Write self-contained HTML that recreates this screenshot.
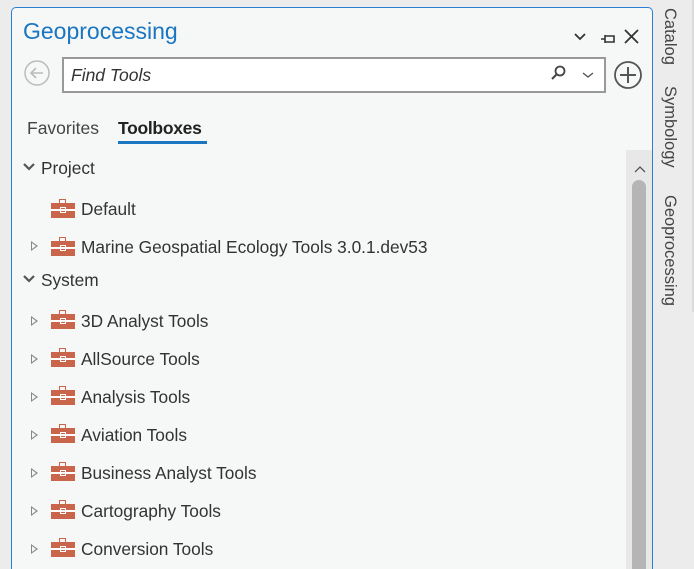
<!DOCTYPE html>
<html style="overflow:hidden;height:569px"><head><style>
body{margin:0;width:694px;height:569px;background:#ececec;font-family:"Liberation Sans",sans-serif;position:relative;overflow:hidden}
.panel{position:absolute;left:11px;top:7px;width:640px;height:562px;border:1px solid #2a7fd4;border-bottom:none;border-radius:5px 5px 0 0;background:#f6f7f7;overflow:hidden}
.title{position:absolute;left:11px;top:10px;font-size:23px;color:#1a76c0}
.search{position:absolute;left:50px;top:49px;width:540px;height:32px;border:2px solid #999;background:#fff}
.search span{position:absolute;left:7px;top:6px;font-size:17.5px;font-style:italic;color:#333}
.tab{position:absolute;top:110px;font-size:17.5px;color:#444}
.row{position:absolute;font-size:17.3px;color:#333;white-space:nowrap;line-height:20px}
.ico{position:absolute;left:40px;width:24px;height:15px;background:#c9654a}
.ico:before{content:"";position:absolute;left:8px;top:-4px;width:7px;height:4px;border:1px solid #c9654a;border-bottom:none;box-sizing:border-box}
.ico:after{content:"";position:absolute;left:0;right:0;top:6px;height:2px;background:#fff}
.ico i{position:absolute;left:9px;top:4px;width:6px;height:6px;border:1px solid #fff;box-sizing:border-box;z-index:1}
.tri{position:absolute;left:20px;width:0;height:0;border-left:6px solid transparent;border-top:5px solid transparent;border-bottom:5px solid transparent}
.tri:before{content:"";position:absolute;left:-6px;top:-5px;width:0;height:0;border-left:7px solid #888;border-top:5px solid transparent;border-bottom:5px solid transparent}
.tri:after{content:"";position:absolute;left:-5px;top:-3px;width:0;height:0;border-left:4px solid #f6f7f7;border-top:3px solid transparent;border-bottom:3px solid transparent}
.side{position:absolute;left:660px;font-size:16.5px;color:#444;writing-mode:vertical-rl;white-space:nowrap}
</style></head><body>
<div class="panel">
<div class="title">Geoprocessing</div>
<svg style="position:absolute;left:560px;top:18px" width="70" height="22"><path d="M3 8l5 5 5-5" stroke="#333" stroke-width="1.8" fill="none"/><path d="M29 13h4M33 9v8M33 10h9v6h-9" stroke="#333" stroke-width="1.6" fill="none"/><path d="M53 4l13 13M66 4l-13 13" stroke="#333" stroke-width="1.8"/></svg>
<svg style="position:absolute;left:12px;top:52px" width="28" height="28"><circle cx="13" cy="13" r="12" fill="none" stroke="#bbb" stroke-width="1.5"/><path d="M7 13h12M12 8l-5 5 5 5" stroke="#bbb" stroke-width="1.6" fill="none"/></svg>
<div class="search"><span>Find Tools</span>
<svg style="position:absolute;left:484px;top:5px" width="50" height="20"><circle cx="12" cy="7" r="4.5" fill="none" stroke="#444" stroke-width="1.8"/><path d="M9 10l-5 5" stroke="#444" stroke-width="2"/><path d="M35 9l5 4 5-4" stroke="#555" stroke-width="1.4" fill="none"/></svg></div>
<svg style="position:absolute;left:601px;top:52px" width="30" height="30"><circle cx="15" cy="15" r="13" fill="none" stroke="#555" stroke-width="1.8"/><path d="M15 7v16M7 15h16" stroke="#555" stroke-width="2"/></svg>
<div class="tab" style="left:15px">Favorites</div>
<div class="tab" style="left:106px;color:#222;font-weight:bold;letter-spacing:-0.3px">Toolboxes</div>
<div style="position:absolute;left:106px;top:133px;width:89px;height:3px;background:#1a76c0"></div>
<div style="position:absolute;left:614px;top:142px;width:26px;height:420px;background:#e8e8e8"></div>
<svg style="position:absolute;left:622px;top:158px" width="12" height="8"><path d="M1 6l5-5 5 5" stroke="#555" stroke-width="1.3" fill="none"/></svg>
<div style="position:absolute;left:620px;top:172px;width:14px;height:390px;background:#b5b5b5;border-radius:7px 7px 0 0"></div>
</div>
<svg style="position:absolute;left:23px;top:162px" width="12" height="10"><path d="M1 2l5 5 5-5" stroke="#555" stroke-width="2.2" fill="none"/></svg>
<div class="row" style="left:41px;top:158px">Project</div>
<svg style="position:absolute;left:23px;top:274px" width="12" height="10"><path d="M1 2l5 5 5-5" stroke="#555" stroke-width="2.2" fill="none"/></svg>
<div class="row" style="left:41px;top:270px">System</div>
<div style="position:absolute;left:11px;top:0">
<div class="ico" style="top:203px"><i></i></div><div class="row" style="left:70px;top:199px">Default</div>
<div class="tri" style="top:241px"></div><div class="ico" style="top:241px"><i></i></div><div class="row" style="left:70px;top:237px">Marine Geospatial Ecology Tools 3.0.1.dev53</div>
<div class="tri" style="top:316px"></div><div class="ico" style="top:314px"><i></i></div><div class="row" style="left:70px;top:311px">3D Analyst Tools</div>
<div class="tri" style="top:354px"></div><div class="ico" style="top:352px"><i></i></div><div class="row" style="left:70px;top:349px">AllSource Tools</div>
<div class="tri" style="top:392px"></div><div class="ico" style="top:390px"><i></i></div><div class="row" style="left:70px;top:387px">Analysis Tools</div>
<div class="tri" style="top:430px"></div><div class="ico" style="top:428px"><i></i></div><div class="row" style="left:70px;top:425px">Aviation Tools</div>
<div class="tri" style="top:468px"></div><div class="ico" style="top:466px"><i></i></div><div class="row" style="left:70px;top:463px">Business Analyst Tools</div>
<div class="tri" style="top:506px"></div><div class="ico" style="top:504px"><i></i></div><div class="row" style="left:70px;top:501px">Cartography Tools</div>
<div class="tri" style="top:544px"></div><div class="ico" style="top:542px"><i></i></div><div class="row" style="left:70px;top:539px">Conversion Tools</div>
</div>
<div style="position:absolute;left:692px;top:0;width:2px;height:312px;background:#dcdcdc"></div>
<div class="side" style="top:8px">Catalog</div>
<div class="side" style="top:86px">Symbology</div>
<div class="side" style="top:195px">Geoprocessing</div>
</body></html>
